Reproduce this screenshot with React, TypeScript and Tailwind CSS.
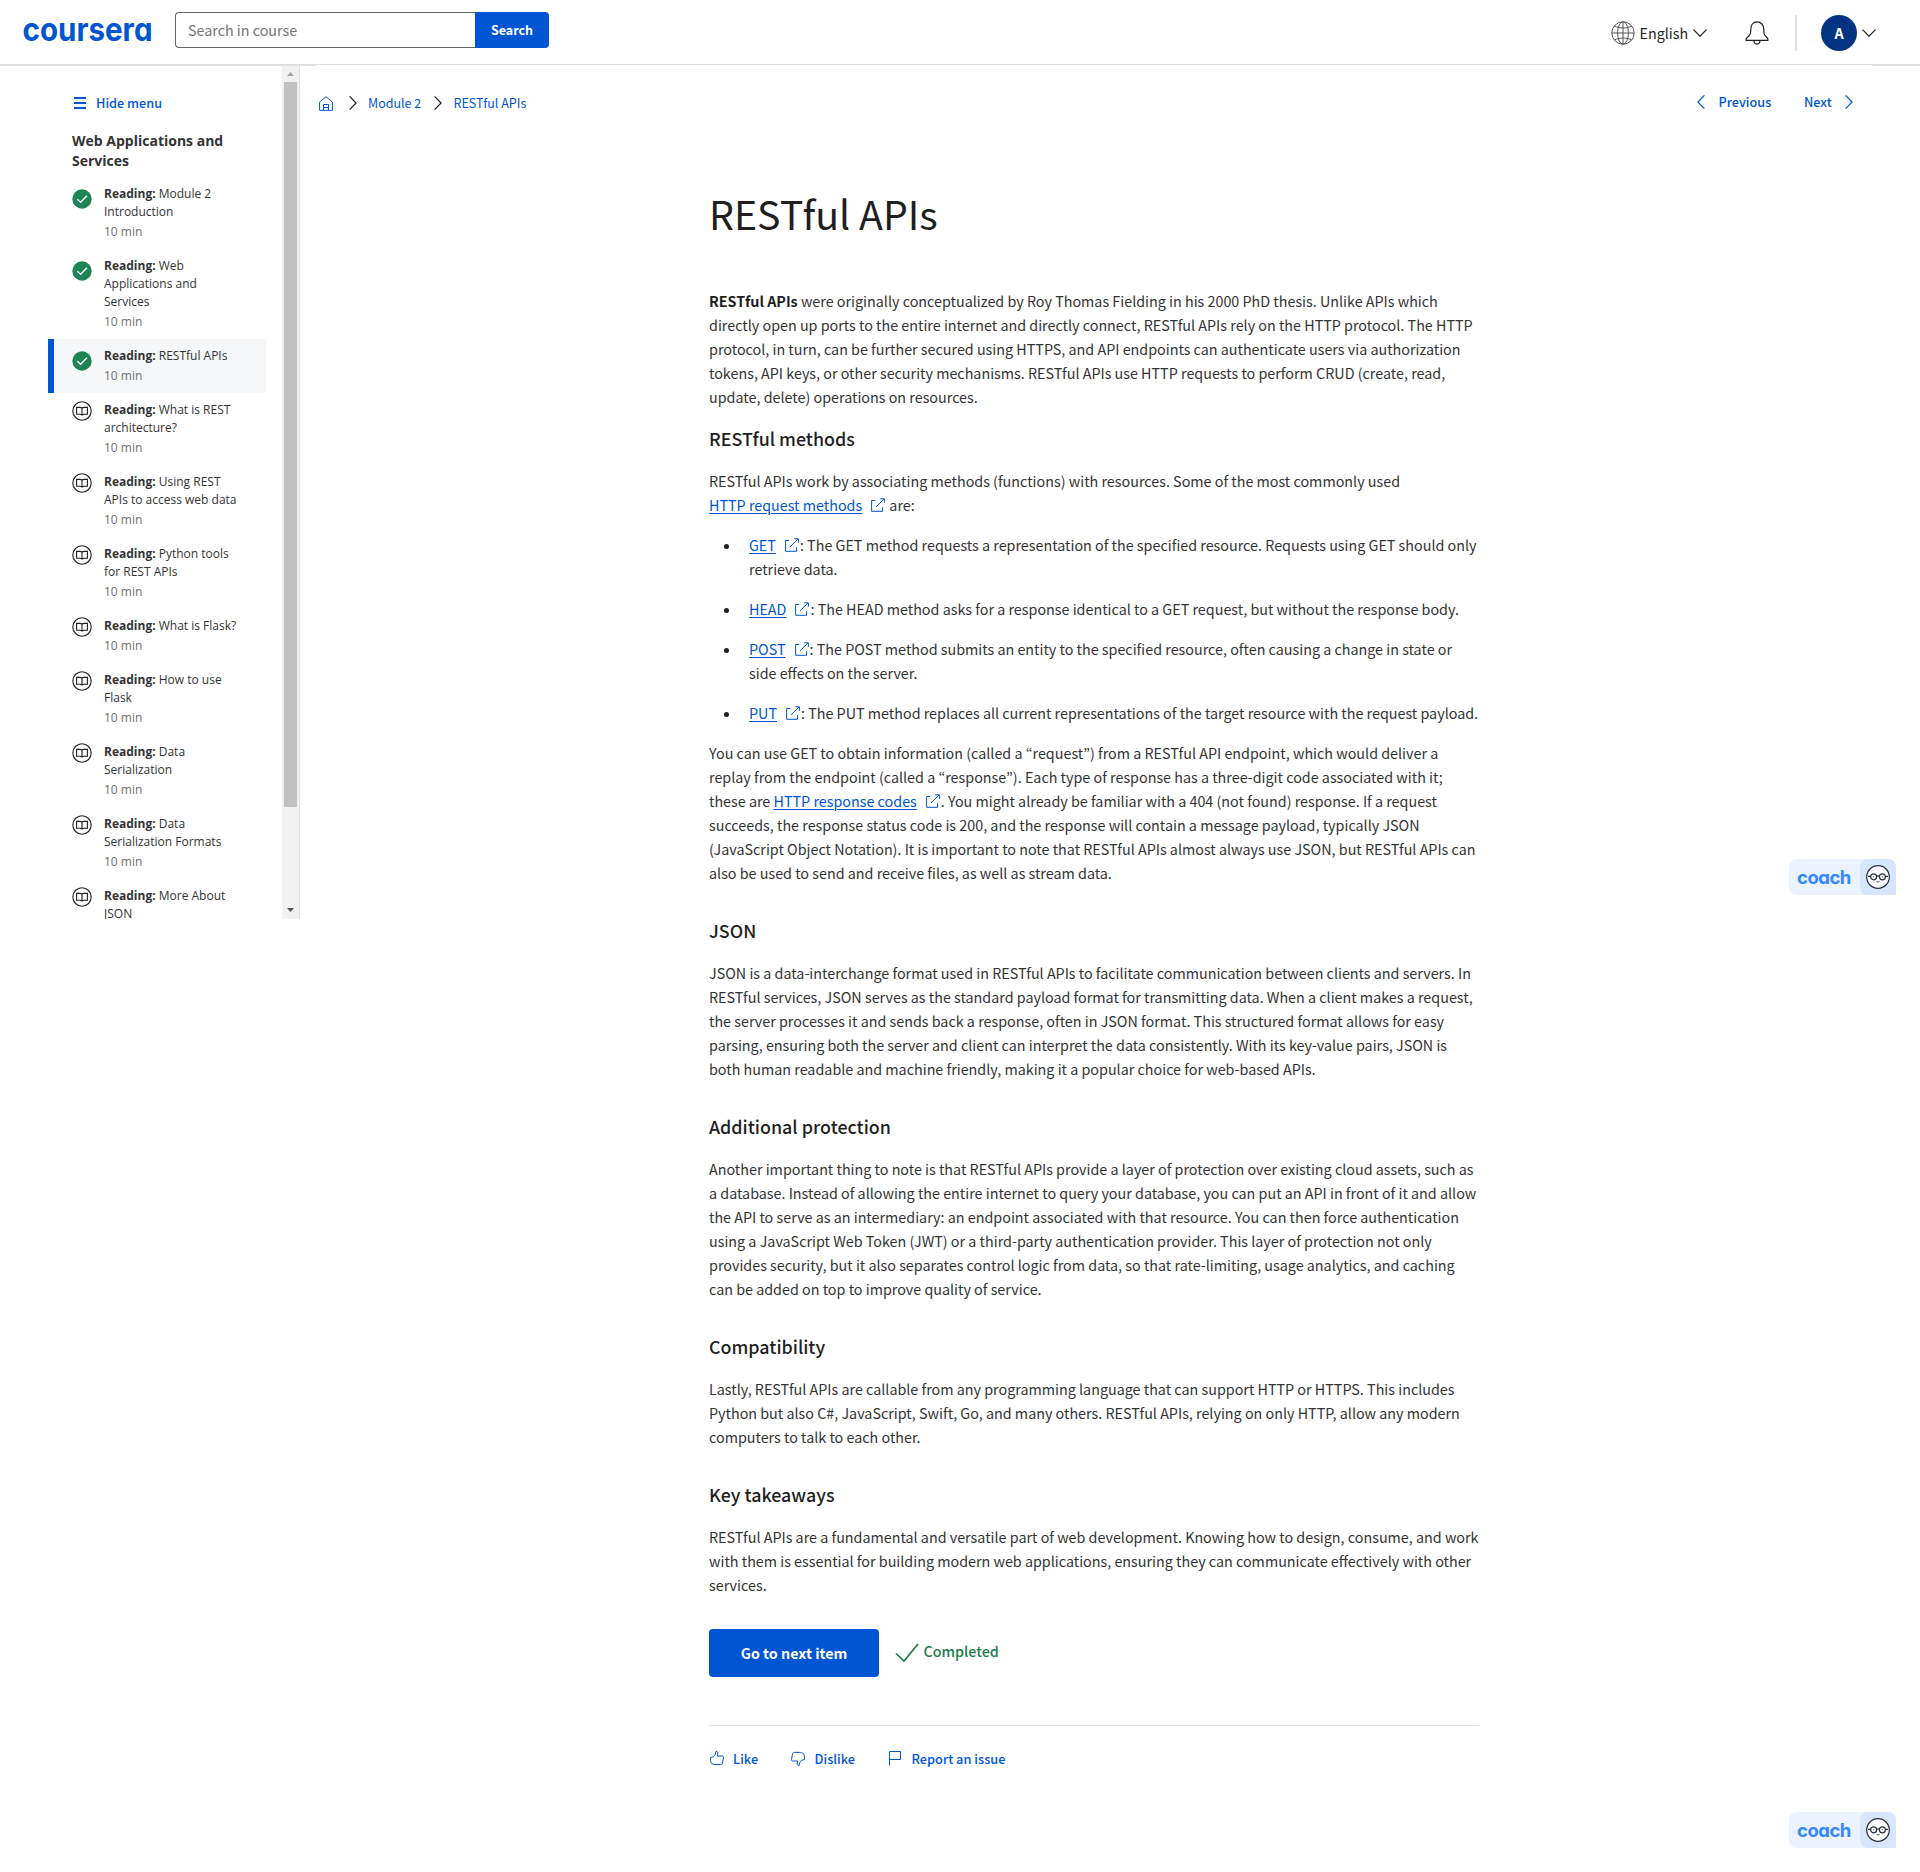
import React from "react";

const SANS = "font-['Noto_Sans_CJK_JP','Source_Sans_Pro',sans-serif]";

type Item = { lines: string[]; done?: boolean; active?: boolean };

const ITEMS: Item[] = [
  { lines: ["Module 2", "Introduction"], done: true },
  { lines: ["Web", "Applications and", "Services"], done: true },
  { lines: ["RESTful APIs"], done: true, active: true },
  { lines: ["What is REST", "architecture?"] },
  { lines: ["Using REST", "APIs to access web data"] },
  { lines: ["Python tools", "for REST APIs"] },
  { lines: ["What is Flask?"] },
  { lines: ["How to use", "Flask"] },
  { lines: ["Data", "Serialization"] },
  { lines: ["Data", "Serialization Formats"] },
  { lines: ["More About", "JSON"] },
];

function DoneIcon() {
  return (
    <svg className="mt-1 block size-5 shrink-0" viewBox="0 0 20 20" fill="none">
      <circle cx="10" cy="10" r="9.7" fill="#1f8354" />
      <path d="M5.3 10.3 8.6 13.3 15 6.8" stroke="#fff" strokeWidth="1.4" />
    </svg>
  );
}

function BookIcon() {
  return (
    <svg className="block size-5 shrink-0" viewBox="0 0 20 20" fill="none" stroke="#1f1f1f" strokeWidth="1.1">
      <circle cx="10" cy="10" r="9.2" />
      <path d="M10 7.2C9.400 6.500 8.600 6.400 7.800 6.400H4.600v6.800h3.200c1.200 0 1.800.1 2.200.8.4-.7 1-.8 2.200-.8h3.200V6.400h-3.200c-.8 0-1.600.1-2.200.8v6.800" />
    </svg>
  );
}

function Chevron({ dir, className }: { dir: "left" | "right" | "down"; className: string }) {
  if (dir === "down")
    return (
      <svg className={className} width="14" height="8" viewBox="0 0 14 8" fill="none" stroke="currentColor" strokeWidth="1.2">
        <path d="M.5.7 7 7.2 13.5.7" />
      </svg>
    );
  return (
    <svg className={className} width="8" height="14" viewBox="0 0 8 14" fill="none" stroke="currentColor" strokeWidth="1.2">
      <path d={dir === "right" ? "M.6.4 7.1 7 .6 13.6" : "M7.4.4.9 7l6.5 6.6"} />
    </svg>
  );
}

function Ext() {
  return (
    <svg className="ml-[9px] mr-px inline-block align-[-1px]" width="14" height="14" viewBox="0 0 14 14" fill="none" stroke="#0056d2" strokeWidth="1">
      <path d="M4.200 2.500H.6v10.800h11V9.200" />
      <path d="M5 8.9 13 1M9.200.8h4.200v4" />
    </svg>
  );
}

function Link({ children }: { children: React.ReactNode }) {
  return (
    <>
      <a className="text-[#0056d2] underline decoration-1 underline-offset-[1.5px]">{children}</a>
      <Ext />
    </>
  );
}

function P({ lines, className = "" }: { lines: React.ReactNode[]; className?: string }) {
  return (
    <p className={className}>
      {lines.map((l, i) => (
        <span key={i} className="block whitespace-nowrap">
          {l}
        </span>
      ))}
    </p>
  );
}

function H({ children, className = "mt-[33px]" }: { children: React.ReactNode; className?: string }) {
  return <h2 className={`${className} mb-[19px] text-[17.88px] font-medium leading-6 text-[#1f1f1f]`}>{children}</h2>;
}

function Coach() {
  return (
    <div className="flex h-9 w-[107px] items-center rounded-lg rounded-br-none bg-[#ebf3ff]">
      <span className="w-[71px] pl-2 pt-px font-['Inter',sans-serif] text-[18.500px] font-bold leading-none tracking-[-0.5px] text-[#3587fc] [font-feature-settings:'cv11']">
        coach
      </span>
      <span className="flex size-9 items-center justify-center rounded-lg rounded-br-none bg-[#d6e6ff]">
        <svg width="24" height="24" viewBox="0 0 24 24" fill="none" stroke="#2a2f3f">
          <circle cx="12" cy="12" r="11.3" fill="#fff" strokeWidth="1.2" />
          <g strokeWidth="1.2">
            <circle cx="7.6" cy="11.8" r="3" />
            <circle cx="16.4" cy="11.8" r="3" />
            <path d="M10.6 11.2q1.4-.8 2.8 0M4.6 11.4H2M19.4 11.4H22" />
          </g>
          <circle cx="7.8" cy="11.8" r=".6" fill="#2a2f3f" stroke="none" />
          <circle cx="16.2" cy="11.8" r=".6" fill="#2a2f3f" stroke="none" />
          <path d="M10.4 16.4q1.6 1.2 3.2 0" strokeWidth=".8" />
        </svg>
      </span>
    </div>
  );
}

function Header() {
  return (
    <header className="flex h-[65px] items-start border-b border-[#dfdfdf] pl-6">
      <div className="mt-3 h-10 w-[151px]">
        <svg width="130" height="40" viewBox="0 0 130 40" className="overflow-visible">
          <text
            x="-1.500"
            y="28.600"
            textLength="130"
            lengthAdjust="spacingAndGlyphs"
            fill="#0056d2"
            className="font-['Inter',sans-serif] text-[32px] font-bold [font-feature-settings:'cv11']"
          >
            coursera
          </text>
        </svg>
      </div>
      <div className="mt-3 flex h-9">
        <div className="flex w-[300px] items-center rounded-l-[4px] border border-r-0 border-[#636363] pl-3 text-[14.3px] text-[#757575]">
          Search in course
        </div>
        <div className="flex w-[74px] items-center justify-center rounded-r-[4px] bg-[#0056d2] text-[12.5px] font-bold text-white">
          Search
        </div>
      </div>
      <div className="ml-auto flex h-9 items-center pr-11 mt-[15px] text-[#1f1f1f]">
        <svg width="24" height="24" viewBox="0 0 24 24" fill="none" stroke="#555" strokeWidth="1">
          <circle cx="12" cy="12" r="11.2" />
          <ellipse cx="12" cy="12" rx="5.4" ry="11.2" />
          <path d="M.8 12h22.4M12 .8v22.4M3.4 5c4.5 2.6 12.700 2.600 17.200 0M3.400 19c4.500-2.600 12.700-2.600 17.200 0" />
        </svg>
        <span className="ml-[4.500px] w-[53.500px] text-[14.3px] leading-6">English</span>
        <Chevron dir="down" className="" />
        <svg className="ml-[38px]" width="24" height="24" viewBox="0 0 24 24" fill="none" stroke="currentColor" strokeWidth="1.2">
          <path d="M1.2 19.400h21.600v-1.800l-3-3.400c-1-1.200-1-2-1-5.800C18.800 4 16 .9 12 .9S5.800 4 5.800 8.400c0 3.800-.2 4.600-1.200 5.800l-3.400 3.400zM9 19.600c0 2.400 1.200 3.500 3 3.500s3-1.100 3-3.500" />
        </svg>
        <div className="ml-[26px] h-9 w-0.5 bg-[#dfdfdf]" />
        <div className="ml-6 flex size-9 items-center justify-center rounded-full bg-[#003382] text-[14.3px] font-bold text-white">A</div>
        <Chevron dir="down" className="ml-[5px]" />
      </div>
    </header>
  );
}

function Sidebar() {
  return (
    <aside className="flex h-[854px] w-[300px] shrink-0 overflow-hidden border-r border-[#e0e0e0] text-[#333]">
      <div className="w-[282px] pl-12">
        <div className="flex h-5 items-center pl-[26px] mt-7 text-[12.700px] font-medium text-[#0056d2]">
          <svg width="12" height="12" viewBox="0 0 12 12" fill="#0056d2">
            <path d="M0 0h12v2H0zM0 5h12v2H0zM0 10h12v2H0z" />
          </svg>
          <span className="ml-[10px] leading-5">Hide menu</span>
        </div>
        <div className="mt-[18px] mb-1.5 whitespace-nowrap pl-6 font-['Open_Sans',sans-serif] text-[14px] font-bold leading-5">
          Web Applications and
          <br />
          Services
        </div>
        {ITEMS.map((it, i) => (
          <div
            key={i}
            className={`flex w-[218px] border-l-[6px] py-2 pl-[18px] ${it.active ? "border-[#0056d2] bg-[#f5f7f8]" : "border-transparent"}`}
          >
            {it.done ? <DoneIcon /> : <BookIcon />}
            <div className="ml-3 whitespace-nowrap font-['Open_Sans',sans-serif] text-[12px] leading-[18px]">
              {it.lines.map((l, j) => (
                <div key={j}>
                  {j === 0 && <b className="font-bold">Reading: </b>}
                  {l}
                </div>
              ))}
              <div className="mt-0.5 text-[#707070]">10 min</div>
            </div>
          </div>
        ))}
      </div>
      <div className="flex w-[17px] flex-col items-center bg-[#f1f1f1]">
        <svg className="mt-[7px]" width="7" height="4" viewBox="0 0 7 4" fill="#a3a3a3">
          <path d="M0 4 3.500 0 7 4z" />
        </svg>
        <div className="mt-[6px] h-[725px] w-[13px] bg-[#c1c1c1]" />
        <svg className="mt-auto mb-[7px]" width="7" height="4" viewBox="0 0 7 4" fill="#505050">
          <path d="M0 0 3.500 4 7 0z" />
        </svg>
      </div>
    </aside>
  );
}

const METHODS: { name: string; lines: string[] }[] = [
  { name: "GET", lines: [": The GET method requests a representation of the specified resource. Requests using GET should only", "retrieve data."] },
  { name: "HEAD", lines: [": The HEAD method asks for a response identical to a GET request, but without the response body."] },
  { name: "POST", lines: [": The POST method submits an entity to the specified resource, often causing a change in state or", "side effects on the server."] },
  { name: "PUT", lines: [": The PUT method replaces all current representations of the target resource with the request payload."] },
];

function Article() {
  return (
    <article className="ml-[393px] mt-[70px] w-[770px] text-[14.330px] leading-6 text-[#333]">
      <h1 className="text-[39.300px] font-normal leading-[60px] text-[#1f1f1f]">RESTful APIs</h1>
      <P
        className="mt-[46px]"
        lines={[
          <><b className="text-[#1f1f1f]">RESTful APIs</b> were originally conceptualized by Roy Thomas Fielding in his 2000 PhD thesis. Unlike APIs which</>,
          "directly open up ports to the entire internet and directly connect, RESTful APIs rely on the HTTP protocol. The HTTP",
          "protocol, in turn, can be further secured using HTTPS, and API endpoints can authenticate users via authorization",
          "tokens, API keys, or other security mechanisms. RESTful APIs use HTTP requests to perform CRUD (create, read,",
          "update, delete) operations on resources.",
        ]}
      />
      <H className="mt-[17px]">RESTful methods</H>
      <P
        lines={[
          "RESTful APIs work by associating methods (functions) with resources. Some of the most commonly used",
          <><Link>HTTP request methods</Link> are:</>,
        ]}
      />
      <ul className="my-4 flex flex-col gap-4">
        {METHODS.map((m) => (
          <li key={m.name} className="flex">
            <span className="ml-[15px] mt-[11px] size-[5px] rounded-full bg-[#1f1f1f]" />
            <P className="ml-5" lines={m.lines.map((l, i) => (i === 0 ? <><Link>{m.name}</Link>{l}</> : l))} />
          </li>
        ))}
      </ul>
      <P
        lines={[
          "You can use GET to obtain information (called a “request”) from a RESTful API endpoint, which would deliver a",
          "replay from the endpoint (called a “response”). Each type of response has a three-digit code associated with it;",
          <>these are <Link>HTTP response codes</Link>. You might already be familiar with a 404 (not found) response. If a request</>,
          "succeeds, the response status code is 200, and the response will contain a message payload, typically JSON",
          "(JavaScript Object Notation). It is important to note that RESTful APIs almost always use JSON, but RESTful APIs can",
          "also be used to send and receive files, as well as stream data.",
        ]}
      />
      <H>JSON</H>
      <P
        lines={[
          "JSON is a data-interchange format used in RESTful APIs to facilitate communication between clients and servers. In",
          "RESTful services, JSON serves as the standard payload format for transmitting data. When a client makes a request,",
          "the server processes it and sends back a response, often in JSON format. This structured format allows for easy",
          "parsing, ensuring both the server and client can interpret the data consistently. With its key-value pairs, JSON is",
          "both human readable and machine friendly, making it a popular choice for web-based APIs.",
        ]}
      />
      <H>Additional protection</H>
      <P
        lines={[
          "Another important thing to note is that RESTful APIs provide a layer of protection over existing cloud assets, such as",
          "a database. Instead of allowing the entire internet to query your database, you can put an API in front of it and allow",
          "the API to serve as an intermediary: an endpoint associated with that resource. You can then force authentication",
          "using a JavaScript Web Token (JWT) or a third-party authentication provider. This layer of protection not only",
          "provides security, but it also separates control logic from data, so that rate-limiting, usage analytics, and caching",
          "can be added on top to improve quality of service.",
        ]}
      />
      <H>Compatibility</H>
      <P
        lines={[
          "Lastly, RESTful APIs are callable from any programming language that can support HTTP or HTTPS. This includes",
          "Python but also C#, JavaScript, Swift, Go, and many others. RESTful APIs, relying on only HTTP, allow any modern",
          "computers to talk to each other.",
        ]}
      />
      <H>Key takeaways</H>
      <P
        lines={[
          "RESTful APIs are a fundamental and versatile part of web development. Knowing how to design, consume, and work",
          "with them is essential for building modern web applications, ensuring they can communicate effectively with other",
          "services.",
        ]}
      />
      <div className="mt-8 flex h-12 items-center">
        <button className="h-12 w-[170px] rounded-[4px] bg-[#0056d2] text-[14.300px] font-bold text-white">Go to next item</button>
        <svg className="ml-[16px]" width="24" height="20" viewBox="0 0 24 20" fill="none" stroke="#1d7c4d" strokeWidth="1.700">
          <path d="M1 10.500 9 18 23 1" />
        </svg>
        <span className="mb-1 ml-[4.500px] text-[14.300px] font-medium text-[#1d7c4d]">Completed</span>
      </div>
      <div className="mt-12 flex h-[67px] items-center border-t border-[#dfdfdf] text-[12.800px] font-medium text-[#0056d2]">
        <svg className="mb-0.5" width="16" height="16" viewBox="0 0 16 16" fill="none" stroke="currentColor" strokeWidth="1">
          <path d="M1.500 7.500 4.400 6.800C6 5.600 6.500 3.600 7 1.300c1.700.1 2 1.400 1.700 2.700L8.300 6h4.900c1 0 1.500.7 1.300 1.600l-1 5.300c-.2 1.200-.8 1.700-1.900 1.700H6.200c-1.200 0-2.200-.3-3.700-1.200C1.600 12 1.300 9.800 1.500 7.500z" />
        </svg>
        <span className="ml-2 w-[57px]">Like</span>
        <svg width="16" height="16" viewBox="0 0 16 16" fill="none" stroke="currentColor" strokeWidth="1">
          <path d="M14.500 8.500 11.600 9.200C10 10.400 9.500 12.400 9 14.700c-1.700-.1-2-1.400-1.700-2.700L7.700 10H2.800c-1 0-1.500-.7-1.300-1.600l1-5.300C2.700 1.900 3.300 1.400 4.400 1.400h5.400c1.200 0 2.200.3 3.700 1.200.9 1.400 1.200 3.600 1 5.900z" />
        </svg>
        <span className="ml-[8.500px] w-[73.500px]">Dislike</span>
        <svg className="mb-0.5" width="14" height="16" viewBox="0 0 14 16" fill="none" stroke="currentColor" strokeWidth="1">
          <path d="M1.500 15.500v-14h11v8h-11" />
        </svg>
        <span className="ml-[9.500px] whitespace-nowrap">Report an issue</span>
      </div>
    </article>
  );
}

export default function App() {
  return (
    <div className={`relative h-[1872px] w-[1920px] overflow-hidden bg-white ${SANS}`}>
      <Header />
      <div className="flex">
        <Sidebar />
        <main className="min-w-0 flex-1 pl-4">
          <div className="flex h-5 items-center pr-[67px] mt-7 text-[12.500px] leading-5 text-[#0056d2]">
            <svg className="ml-[3px]" width="14" height="15" viewBox="0 0 14 15" fill="none" stroke="currentColor" strokeWidth="1">
              <path d="M.6 6 7 .8 13.400 6v8.300H.6zM4.500 14V8.500h5V14M4.500 11.500h5" />
            </svg>
            <Chevron dir="right" className="ml-4 text-[#1f1f1f]" />
            <span className="ml-[11px] w-[66px]">Module 2</span>
            <Chevron dir="right" className="text-[#1f1f1f]" />
            <span className="ml-[11.500px]">RESTful APIs</span>
            <div className="mb-0.5 ml-auto flex items-center text-[12.700px] font-medium">
              <Chevron dir="left" className="" />
              <span className="ml-[13.500px] w-[85.500px]">Previous</span>
              <span className="w-[41px]">Next</span>
              <Chevron dir="right" className="" />
            </div>
          </div>
          <Article />
        </main>
      </div>
      <div className="absolute left-0 top-[65px] h-px w-[316px] bg-[#e3e3e3]" />
      <div className="absolute right-0 top-[65px] h-px w-12 bg-[#e3e3e3]" />
      <div className="absolute left-[1789px] top-[859px]">
        <Coach />
      </div>
      <div className="absolute left-[1789px] top-[1812px]">
        <Coach />
      </div>
    </div>
  );
}
